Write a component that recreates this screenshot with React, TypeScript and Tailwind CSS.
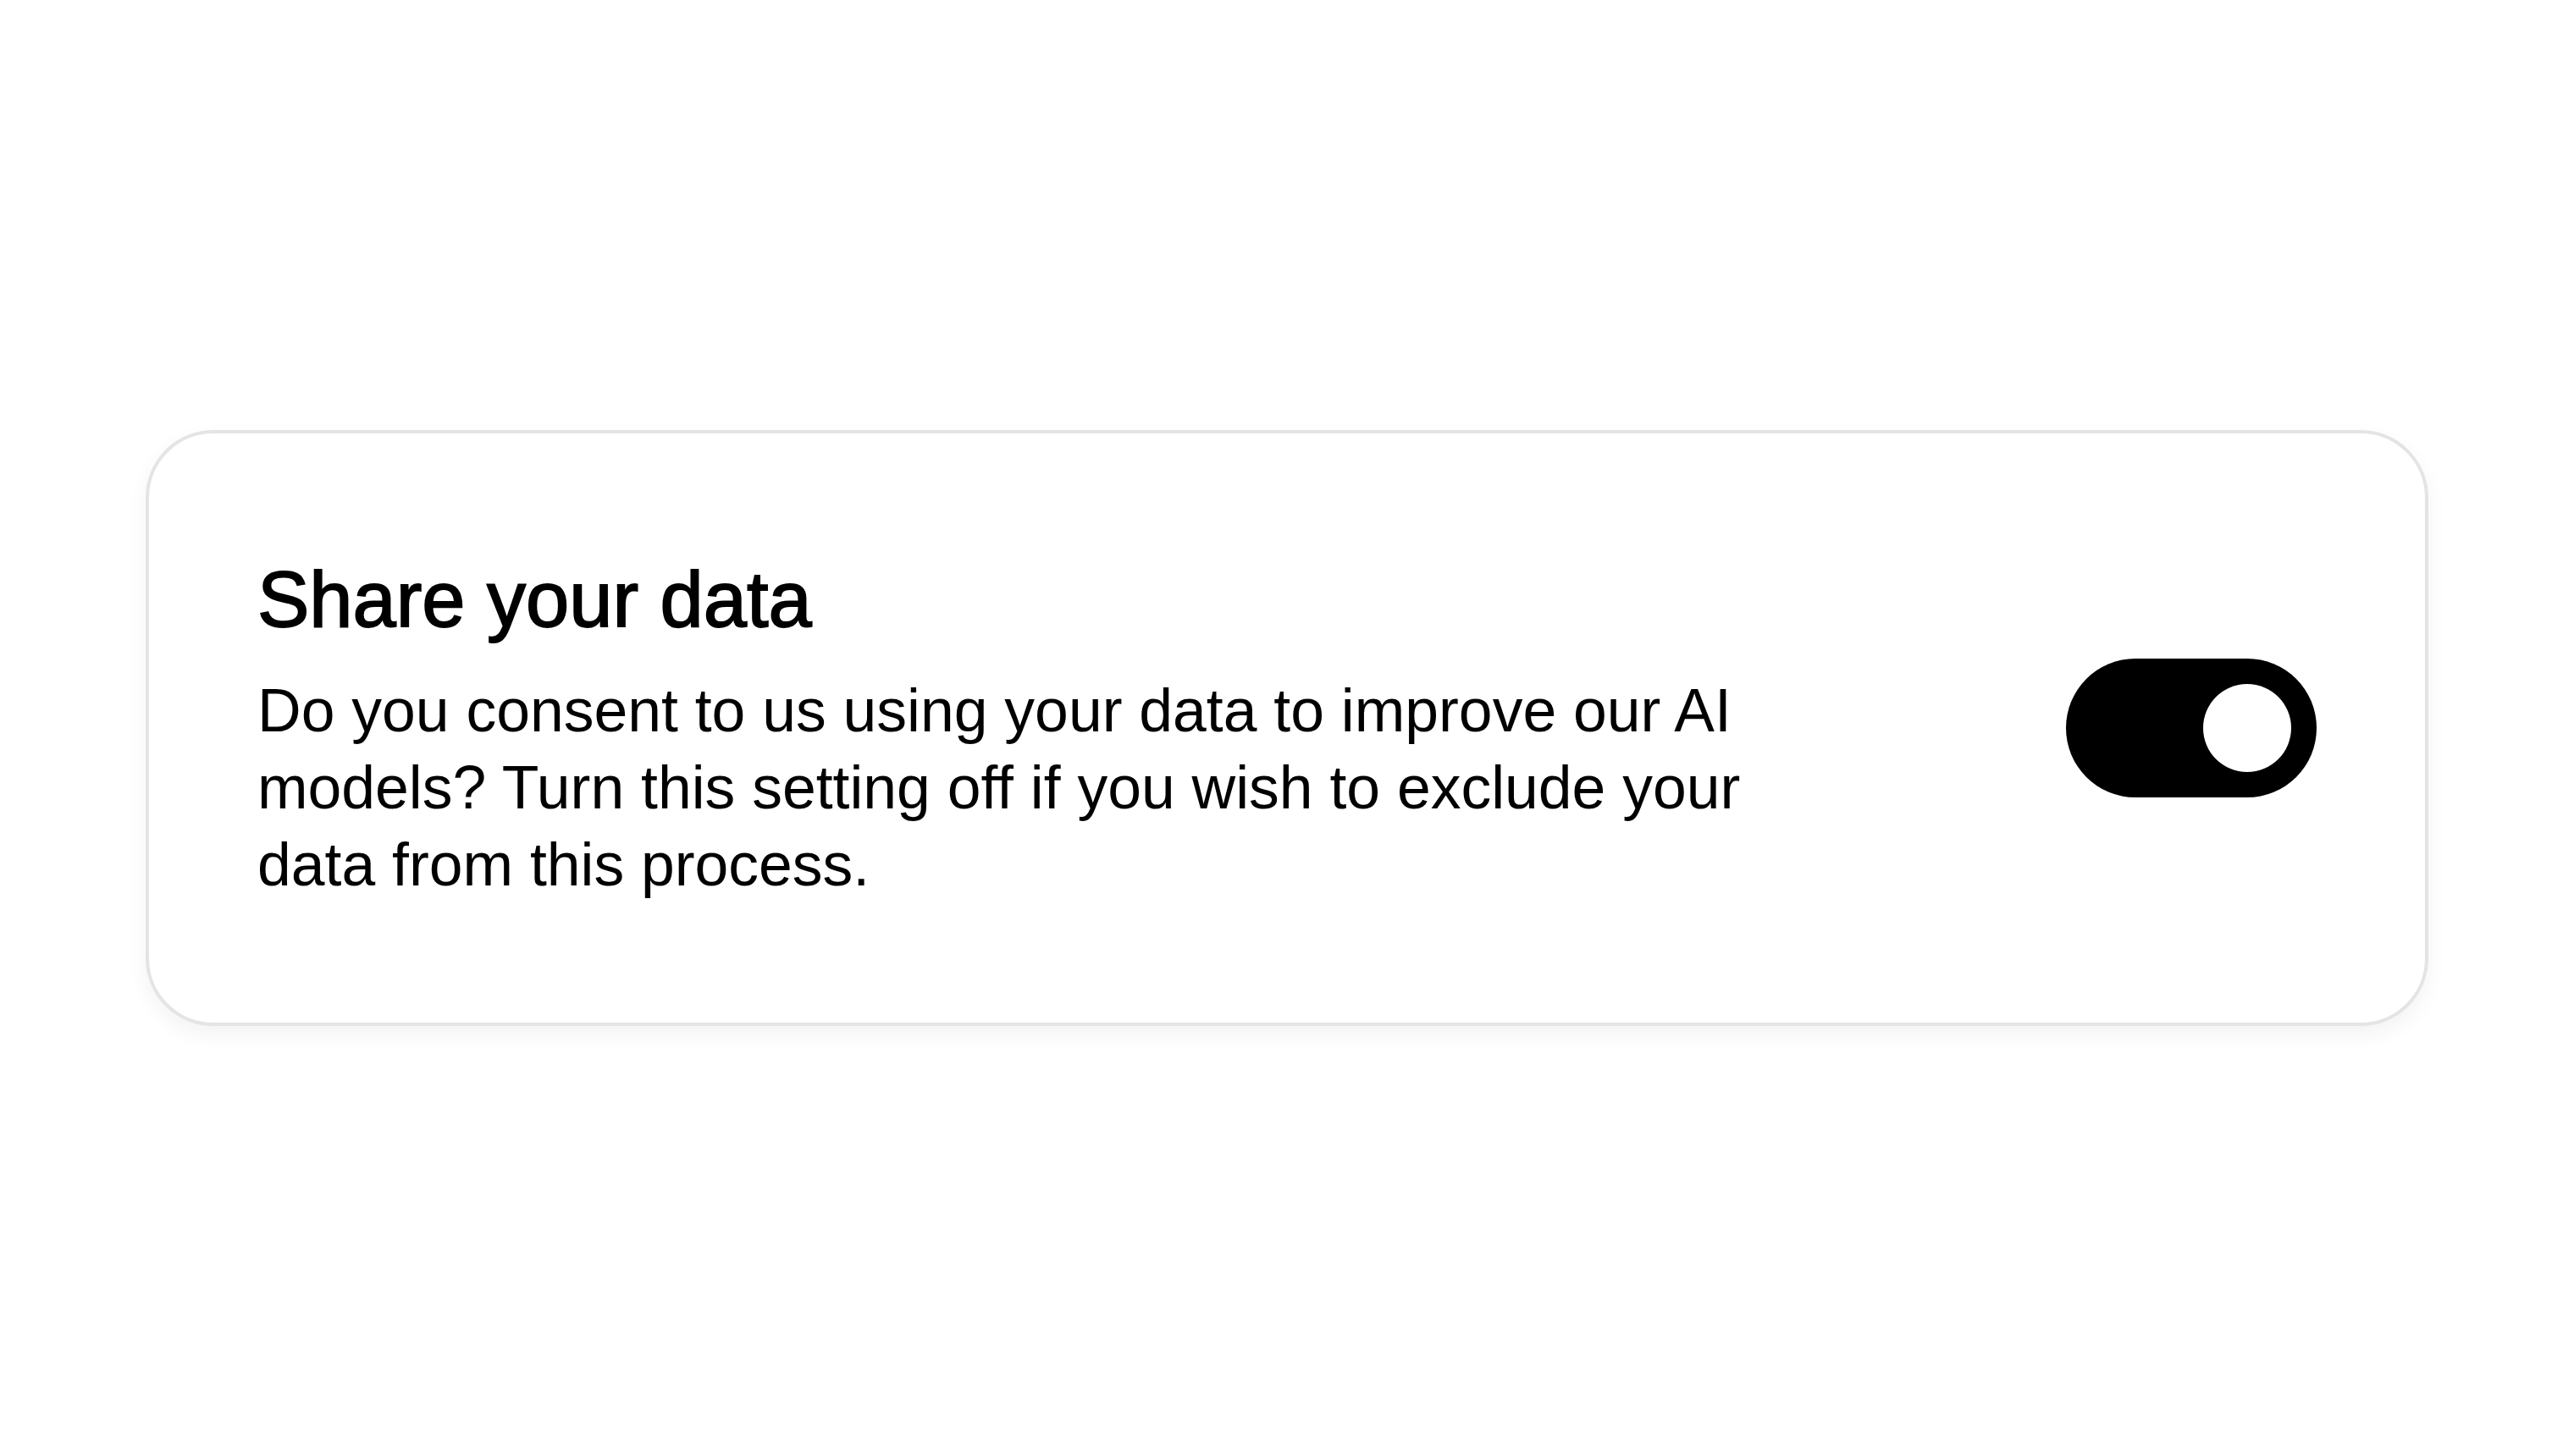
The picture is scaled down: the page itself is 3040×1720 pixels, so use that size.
import React from "react";

export default function App() {
  return (
    <div className="w-[3040px] h-[1720px] bg-white flex items-center justify-center font-['Liberation_Sans',Arial,sans-serif] text-black">
      <div className="w-[2696px] h-[704px] box-border border-[4px] border-[#e4e4e4] rounded-[80px] bg-white shadow-[0_10px_24px_rgba(0,0,0,0.05)] flex items-center justify-between px-[128px]">
        <div className="flex flex-col">
          <h1 className="text-[92px] leading-[1.2] font-medium [-webkit-text-stroke:1.8px_black] tracking-[0px]">
            Share your data
          </h1>
          <p className="mt-[30px] max-w-[1840px] text-[71.5px] leading-[91px]">
            Do you consent to us using your data to improve our AI models? Turn this setting off if you wish to exclude your data from this process.
          </p>
        </div>
        <button
          type="button"
          role="switch"
          aria-checked="true"
          className="w-[296px] h-[164px] rounded-full bg-black flex items-center justify-end pr-[30px] shrink-0"
        >
          <span className="block w-[104px] h-[104px] rounded-full bg-white" />
        </button>
      </div>
    </div>
  );
}
